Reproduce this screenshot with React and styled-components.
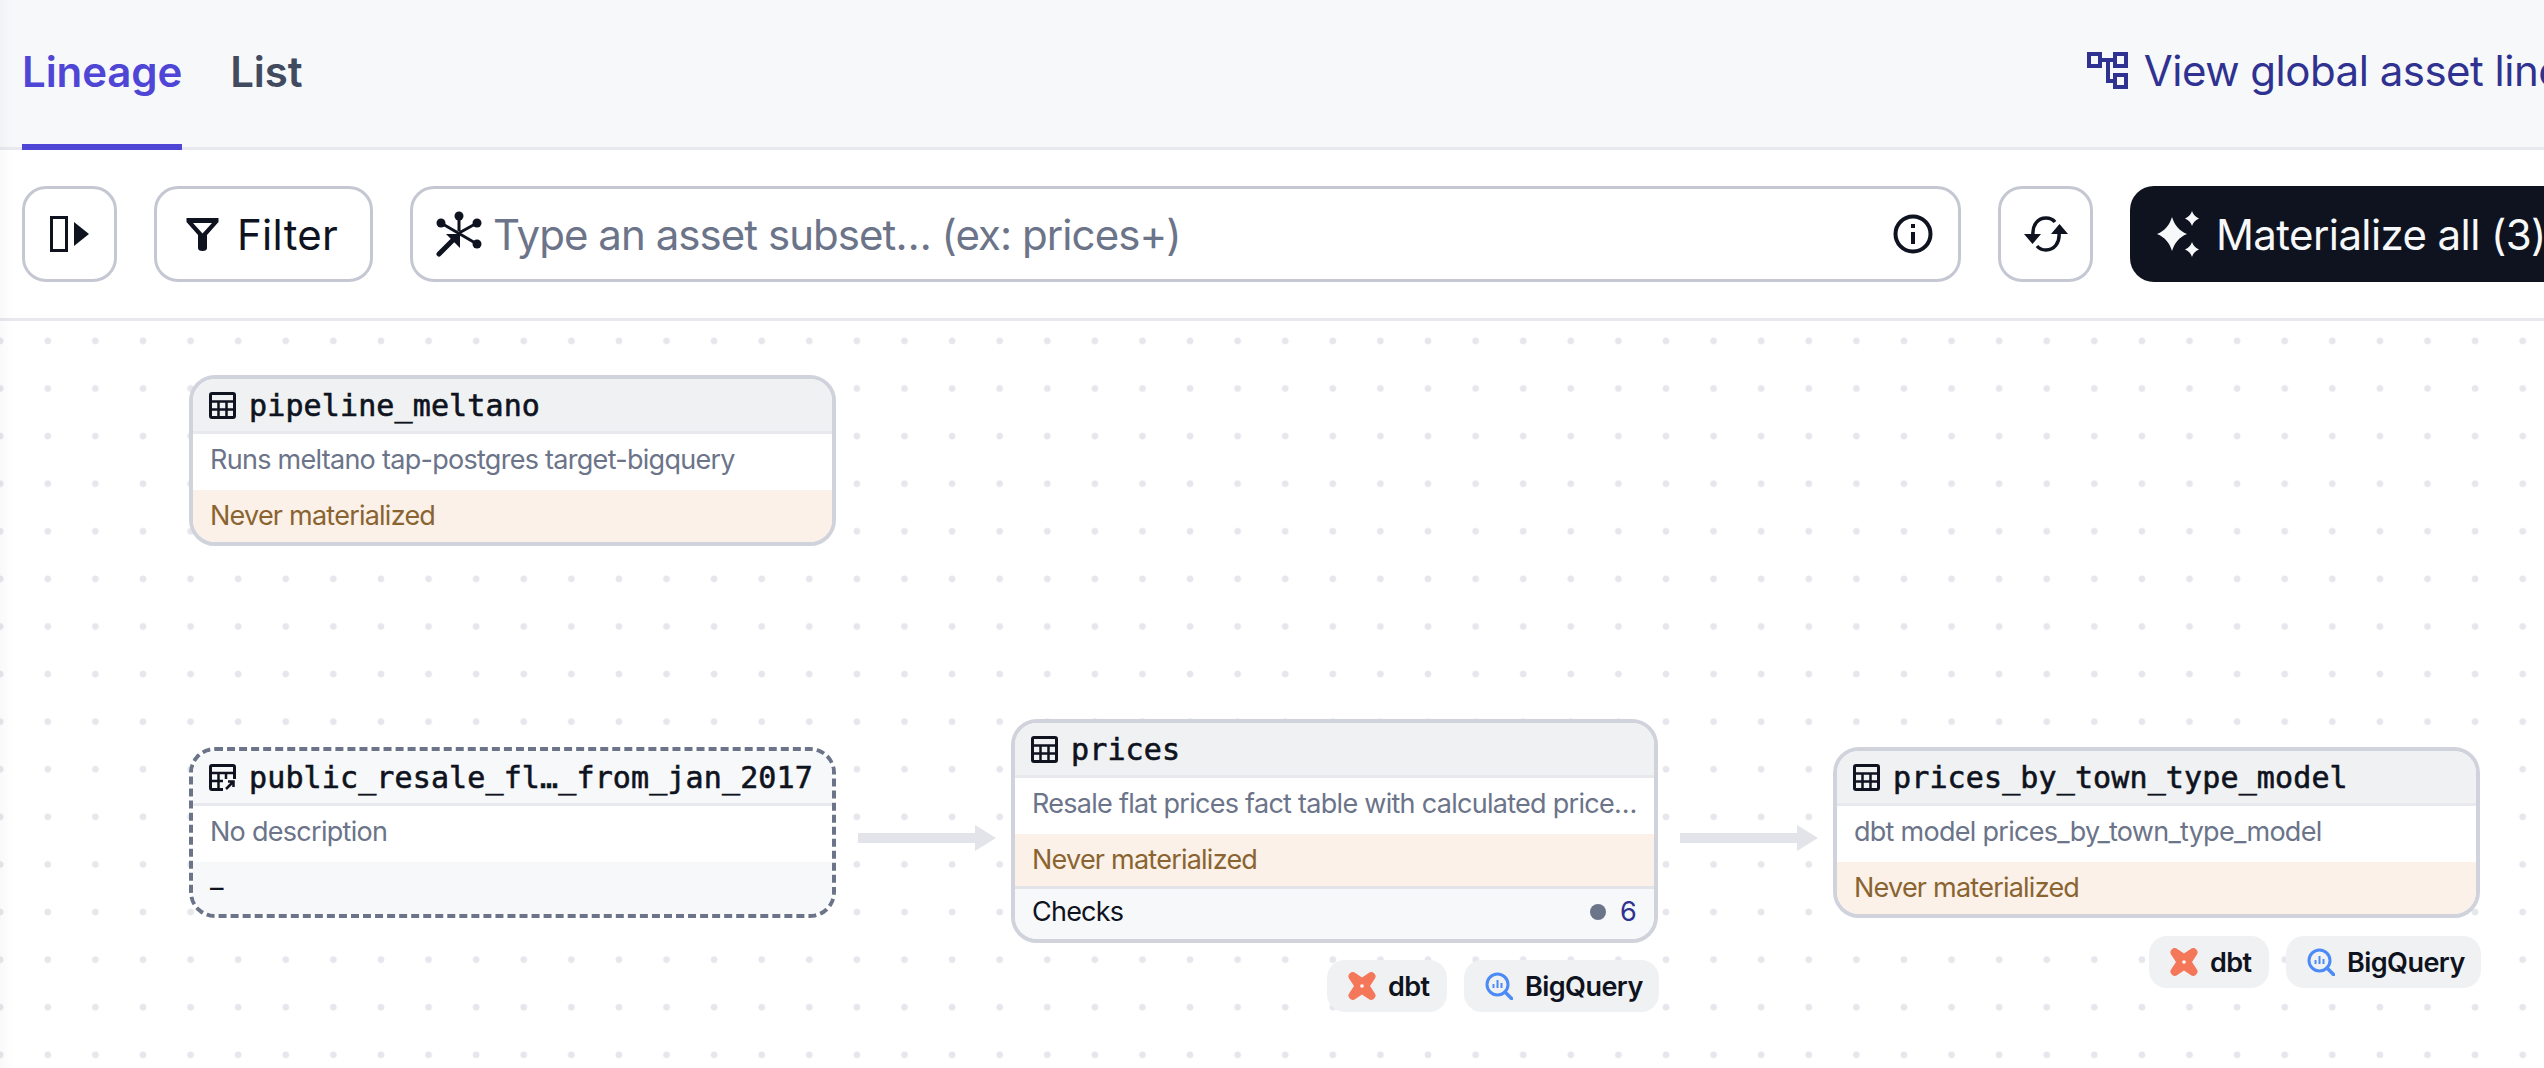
import React from 'react';
import styled, { createGlobalStyle, css } from 'styled-components';

const SANS = `Inter, "Liberation Sans", sans-serif`;
const MONO = `"DejaVu Sans Mono", "Liberation Mono", monospace`;
const INK = '#0f1320';

const GlobalStyle = createGlobalStyle`
  html, body {
    margin: 0;
    height: 100%;
    overflow: hidden;
    background: #fff;
  }
  #root {
    height: 100%;
  }
`;

const Page = styled.div`
  position: relative;
  display: flex;
  flex-direction: column;
  width: 2700px;
  height: 1068px;
  font-family: ${SANS};
  color: ${INK};
  overflow: hidden;
  &::after {
    content: '';
    position: absolute;
    left: 0;
    top: 0;
    bottom: 0;
    width: 14px;
    background: linear-gradient(to right, rgba(15, 19, 32, 0.025), rgba(15, 19, 32, 0));
    pointer-events: none;
  }
`;

const TabBar = styled.div`
  display: flex;
  justify-content: space-between;
  box-sizing: border-box;
  height: 150px;
  padding: 0 22px;
  background: #f7f8fa;
  border-bottom: 3px solid #e8e9ee;
`;

const Tabs = styled.div`
  display: flex;
  gap: 48px;
`;

const Tab = styled.div`
  box-sizing: border-box;
  height: 150px;
  padding-top: 47px;
  font-size: 42px;
  line-height: 50px;
  font-weight: 600;
  letter-spacing: -0.1px;
  color: ${props => (props.$active ? '#4f46d6' : '#414a5f')};
  border-bottom: 6px solid ${props => (props.$active ? '#4f46d6' : 'transparent')};
`;

const GlobalLink = styled.div`
  display: flex;
  align-items: center;
  gap: 16px;
  height: 140px;
  margin-right: 43px;
  font-size: 42px;
  letter-spacing: -0.5px;
  color: #2f3290;
`;

const Toolbar = styled.div`
  display: flex;
  align-items: center;
  gap: 37px;
  box-sizing: border-box;
  height: 171px;
  padding: 0 22px;
  border-bottom: 3px solid #e8e9ee;
`;

const outlined = css`
  box-sizing: border-box;
  height: 96px;
  background: #fff;
  border: 3px solid #c5c8d2;
  border-radius: 24px;
`;

const IconButton = styled.div`
  ${outlined}
  flex: none;
  display: flex;
  align-items: center;
  justify-content: center;
  width: ${props => props.$width}px;
`;

const FilterButton = styled.div`
  ${outlined}
  flex: none;
  display: flex;
  align-items: center;
  gap: 18px;
  width: 219px;
  padding-left: 29px;
  font-size: 42px;
  letter-spacing: 0.3px;
`;

const SearchBox = styled.div`
  ${outlined}
  flex: 1;
  display: flex;
  align-items: center;
  gap: 11px;
  padding: 0 25px 0 23px;
`;

const Placeholder = styled.div`
  flex: 1;
  font-size: 42px;
  letter-spacing: -0.95px;
  color: #6b7489;
`;

const MaterializeButton = styled.div`
  flex: none;
  display: flex;
  align-items: center;
  gap: 14px;
  box-sizing: border-box;
  width: 548px;
  height: 96px;
  padding-left: 26px;
  border-radius: 24px;
  background: ${INK};
  color: #f7f8fa;
  font-size: 42px;
  letter-spacing: -0.6px;
`;

const Canvas = styled.div`
  position: relative;
  flex: 1;
  background-color: #fff;
  background-image: radial-gradient(circle at center, #e6e7ec 0, #e6e7ec 3px, transparent 3.8px);
  background-size: 47.6px 47.6px;
  background-position: -23.6px -3.9px;
`;

const Node = styled.div`
  position: absolute;
  left: ${props => props.$x}px;
  top: ${props => props.$y}px;
  box-sizing: border-box;
  width: 647px;
  display: flex;
  flex-direction: column;
  background: #fff;
  border: 4px ${props => (props.$source ? 'dashed #6b7489' : 'solid #d1d3dc')};
  border-radius: 26px;
  overflow: hidden;
`;

const NodeHeader = styled.div`
  display: flex;
  align-items: center;
  gap: 13px;
  box-sizing: border-box;
  height: 55px;
  padding-left: 16px;
  background: ${props => (props.$source ? '#f7f8fa' : '#f0f1f3')};
  border-bottom: 3px solid #e8e9ee;
  font-family: ${MONO};
  font-size: 30px;
  letter-spacing: 0.13px;
  -webkit-text-stroke: 0.6px ${INK};
  white-space: nowrap;
`;

const Description = styled.div`
  box-sizing: border-box;
  height: 56px;
  padding: 0 17px;
  line-height: 52px;
  font-size: 27px;
  letter-spacing: -0.72px;
  color: #6b7489;
  white-space: nowrap;
  overflow: hidden;
`;

const Status = styled.div`
  box-sizing: border-box;
  height: 52px;
  padding: 0 17px;
  line-height: 52px;
  font-size: 27px;
  letter-spacing: -0.77px;
  background: ${props => (props.$empty ? '#f7f8fa' : '#fbf1e8')};
  color: ${props => (props.$empty ? INK : '#8a6430')};
`;

const Checks = styled.div`
  display: flex;
  align-items: center;
  gap: 14px;
  box-sizing: border-box;
  height: 53px;
  padding: 0 18px 5px 17px;
  background: #f7f8fa;
  border-top: 3px solid #e3e4ea;
  font-size: 27px;
  letter-spacing: -0.77px;
`;

const ChecksLabel = styled.div`
  flex: 1;
`;

const ChecksDot = styled.div`
  width: 16px;
  height: 16px;
  border-radius: 50%;
  background: #6b7489;
`;

const ChecksCount = styled.div`
  color: #2f3290;
`;

const TagRow = styled.div`
  position: absolute;
  left: ${props => props.$x}px;
  top: ${props => props.$y}px;
  display: flex;
  gap: 17px;
`;

const Tag = styled.div`
  display: flex;
  align-items: center;
  gap: 12px;
  box-sizing: border-box;
  width: ${props => props.$width}px;
  height: 52px;
  padding-left: 21px;
  border-radius: 18px;
  background: #f0f1f3;
  font-size: 27px;
  font-weight: 600;
  letter-spacing: -0.55px;
`;

const Arrow = styled.svg`
  position: absolute;
  left: ${props => props.$x}px;
  top: 504px;
`;

const TableIcon = ({ view }) => (
  <svg width="27" height="27" viewBox="0 0 27 27" style={{ flex: 'none' }}>
    <rect x="1.5" y="1.5" width="24" height="24" rx="1.5" fill="none" stroke={INK} strokeWidth="3" />
    {view ? (
      <path d="M2 9h23M2 17h13M9.5 9v16M17 9v6" fill="none" stroke={INK} strokeWidth="2.5" />
    ) : (
      <path d="M2 9.5h23M2 17.5h23M9.5 9v17M17.5 9v17" fill="none" stroke={INK} strokeWidth="2.5" />
    )}
    {view && (
      <>
        <rect x="14" y="15" width="13" height="12" fill="#f7f8fa" />
        <path d="M17 25l7-7M19 17.5h5.5V23" fill="none" stroke={INK} strokeWidth="2.5" />
      </>
    )}
  </svg>
);

const SidebarIcon = () => (
  <svg width="39" height="36" viewBox="0 0 39 36">
    <rect x="1.5" y="1.5" width="15" height="33" fill="none" stroke={INK} strokeWidth="3" />
    <path d="M24 6l15 12-15 12z" fill={INK} />
  </svg>
);

const FilterIcon = () => (
  <svg width="33" height="33" viewBox="0 0 33 33">
    <path d="M0.5 0h32v4L21 17v13a4.5 3 0 0 1-9 0V17L0.5 4zM7 5l9.5 10.5L26 5z" fill={INK} fillRule="evenodd" />
  </svg>
);

const LineageIcon = () => (
  <svg width="46" height="46" viewBox="0 0 46 46" style={{ flex: 'none' }}>
    <g fill={INK}>
      <circle cx="23" cy="5" r="4.5" />
      <circle cx="5" cy="12" r="4.5" />
      <circle cx="41" cy="12" r="4.5" />
      <circle cx="41" cy="33" r="4.5" />
    </g>
    <path d="M23 5v15M5 12l36 21M41 12L23 22" fill="none" stroke={INK} strokeWidth="3" />
    <path d="M3 43l17-17" fill="none" stroke={INK} strokeWidth="5" strokeLinecap="round" />
    <path d="M10 23h14v14z" fill={INK} />
  </svg>
);

const InfoIcon = () => (
  <svg width="40" height="40" viewBox="0 0 40 40" style={{ flex: 'none' }}>
    <circle cx="20" cy="20" r="17.5" fill="none" stroke={INK} strokeWidth="4" />
    <rect x="18" y="18" width="4" height="12" fill={INK} />
    <rect x="18" y="10" width="4" height="4" fill={INK} />
  </svg>
);

const RefreshIcon = () => (
  <svg width="44" height="36" viewBox="0 0 44 36">
    <path d="M9 19C8 9 14 2 22 2c4 0 7 1.500 9 4M35 17c1 10-5 17-13 17-4 0-7-1.500-9-4" fill="none" stroke={INK} strokeWidth="3.500" />
    <path d="M0 18h17l-8.500 10zM27 18h17l-8.500-10z" fill={INK} />
  </svg>
);

const SparkleIcon = () => (
  <svg width="46" height="46" viewBox="0 0 46 46" style={{ flex: 'none' }}>
    <g fill="#f7f8fa">
      <path d="M16 6c2 7 7 14 15 17-8 3-13 10-15 17-2-7-7-14-15-17 8-3 13-10 15-17z" />
      <path d="M36 0c1 3 3 6 7 7.500-4 1.500-6 4.500-7 7.500-1-3-3-6-7-7.500 4-1.500 6-4.500 7-7.500z" />
      <path d="M36 31c1 3 3 6 7 7.500-4 1.500-6 4.500-7 7.500-1-3-3-6-7-7.500 4-1.500 6-4.500 7-7.500z" />
    </g>
  </svg>
);

const GlobalLineageIcon = () => (
  <svg width="41" height="37" viewBox="0 0 41 37" style={{ flex: 'none' }}>
    <g fill="none" stroke="#2f3290" strokeWidth="4">
      <rect x="2" y="2" width="11" height="12" />
      <rect x="28" y="2" width="11" height="12" />
      <rect x="28" y="23" width="11" height="12" />
      <path d="M13 8h15M21 8v21h7" />
    </g>
  </svg>
);

const DbtLogo = () => (
  <svg width="28" height="28" viewBox="0 0 28 28">
    <path
      d="M3 0.500c1.500-.8 3-.5 4.300.5L14 5.500 20.700 1c1.300-1 2.800-1.300 4.300-.5 2 1.200 3 3 2.500 4.800-.3 1-1 2-1.700 3L22 14l3.800 5.700c.7 1 1.400 2 1.700 3 .5 1.800-.5 3.600-2.500 4.800-1.500.8-3 .5-4.300-.5L14 22.500 7.300 27c-1.300 1-2.800 1.300-4.300.5-2-1.200-3-3-2.500-4.800.3-1 1-2 1.700-3L6 14 2.200 8.300c-.7-1-1.400-2-1.700-3C0 3.500 1 1.700 3 .5z"
      fill="#f4775a"
    />
    <circle cx="14" cy="14" r="1.800" fill="#fff" />
  </svg>
);

const BigQueryLogo = () => (
  <svg width="28" height="28" viewBox="0 0 28 28">
    <circle cx="12.500" cy="12.500" r="10.500" fill="none" stroke="#4c8bf5" strokeWidth="3" />
    <path d="M20 20l6.500 6.500" stroke="#4c8bf5" strokeWidth="3.500" strokeLinecap="round" />
    <path d="M8.500 12v4M12.500 8v8M16.500 11v5" stroke="#4c8bf5" strokeWidth="2" />
  </svg>
);

const EdgeArrow = ({ x, width }) => (
  <Arrow $x={x} width={width} height="26" viewBox={`0 0 ${width} 26`}>
    <path d={`M0 8h${width - 21}V0L${width} 13 ${width - 21} 26v-8H0z`} fill="#e3e4ea" />
  </Arrow>
);

const NeverMaterialized = () => <Status>Never materialized</Status>;

function App() {
  return (
    <Page>
      <GlobalStyle />
      <TabBar>
        <Tabs>
          <Tab $active>Lineage</Tab>
          <Tab>List</Tab>
        </Tabs>
        <GlobalLink>
          <GlobalLineageIcon />
          View global asset lineage
        </GlobalLink>
      </TabBar>
      <Toolbar>
        <IconButton $width={95}>
          <SidebarIcon />
        </IconButton>
        <FilterButton>
          <FilterIcon />
          Filter
        </FilterButton>
        <SearchBox>
          <LineageIcon />
          <Placeholder>Type an asset subset… (ex: prices+)</Placeholder>
          <InfoIcon />
        </SearchBox>
        <IconButton $width={95}>
          <RefreshIcon />
        </IconButton>
        <MaterializeButton>
          <SparkleIcon />
          Materialize all (3)
        </MaterializeButton>
      </Toolbar>
      <Canvas>
        <Node $x={189} $y={54}>
          <NodeHeader>
            <TableIcon />
            pipeline_meltano
          </NodeHeader>
          <Description>Runs meltano tap-postgres target-bigquery</Description>
          <NeverMaterialized />
        </Node>

        <Node $x={189} $y={426} $source>
          <NodeHeader $source>
            <TableIcon view />
            public_resale_fl…_from_jan_2017
          </NodeHeader>
          <Description>No description</Description>
          <Status $empty>–</Status>
        </Node>

        <EdgeArrow x={858} width={138} />

        <Node $x={1011} $y={398}>
          <NodeHeader>
            <TableIcon />
            prices
          </NodeHeader>
          <Description>Resale flat prices fact table with calculated price…</Description>
          <NeverMaterialized />
          <Checks>
            <ChecksLabel>Checks</ChecksLabel>
            <ChecksDot />
            <ChecksCount>6</ChecksCount>
          </Checks>
        </Node>
        <TagRow $x={1327} $y={639}>
          <Tag $width={120}>
            <DbtLogo />
            dbt
          </Tag>
          <Tag $width={195}>
            <BigQueryLogo />
            BigQuery
          </Tag>
        </TagRow>

        <EdgeArrow x={1680} width={138} />

        <Node $x={1833} $y={426}>
          <NodeHeader>
            <TableIcon />
            prices_by_town_type_model
          </NodeHeader>
          <Description>dbt model prices_by_town_type_model</Description>
          <NeverMaterialized />
        </Node>
        <TagRow $x={2149} $y={615}>
          <Tag $width={120}>
            <DbtLogo />
            dbt
          </Tag>
          <Tag $width={195}>
            <BigQueryLogo />
            BigQuery
          </Tag>
        </TagRow>
      </Canvas>
    </Page>
  );
}

export default App;
